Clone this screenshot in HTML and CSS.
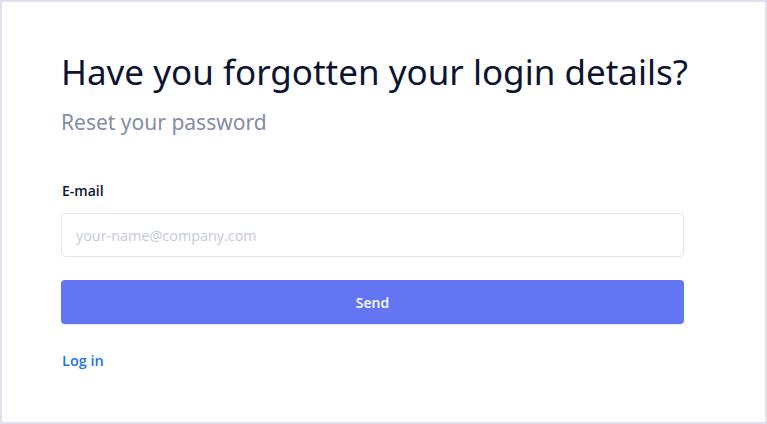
FILE: index.html
```html
<!DOCTYPE html>
<html>
<head>
<meta charset="utf-8">
<link rel="stylesheet" href="styles.css">
</head>
<body>
<div class="frame">
  <div class="content">
    <h1 class="title">Have you forgotten your login details?</h1>
    <p class="subtitle">Reset your password</p>
    <form class="form">
      <label class="label" for="email">E-mail</label>
      <input class="input" id="email" type="text" placeholder="your-name@company.com">
      <button class="button" type="button">Send</button>
    </form>
    <a class="link" href="#">Log in</a>
  </div>
</div>
</body>
</html>
```
FILE: styles.css
```css
html, body {
  margin: 0;
  padding: 0;
  background: #ffffff;
}
.frame {
  box-sizing: border-box;
  width: 767px;
  height: 424px;
  border: 2px solid #dfe2ec;
  padding: 46px 0 0 59px;
}
.content {
  width: 623px;
  display: flex;
  flex-direction: column;
}
.title {
  margin: 0;
  font-family: "Noto Sans", sans-serif;
  font-weight: 400;
  font-size: 35px;
  line-height: 48px;
  color: #0d1431;
  letter-spacing: 0;
  white-space: nowrap;
}
.subtitle {
  margin: 11px 0 0;
  font-family: "Noto Sans", sans-serif;
  font-size: 21px;
  line-height: 30px;
  color: #858ca6;
}
.form {
  display: flex;
  flex-direction: column;
  margin-top: 44px;
}
.label {
  font-family: "Open Sans", sans-serif;
  font-weight: 600;
  font-size: 14px;
  line-height: 20px;
  color: #0d1431;
  margin-left: 1px;
}
.input {
  box-sizing: border-box;
  margin-top: 12px;
  height: 44px;
  width: 623px;
  border: 1px solid #e1e4ed;
  border-radius: 4px;
  padding: 0 14px;
  font-family: "Open Sans", sans-serif;
  font-size: 14.4px;
  color: #0d1431;
  outline: none;
}
.input::placeholder {
  color: #c5c9da;
}
.button {
  margin-top: 23px;
  height: 44px;
  width: 623px;
  border: none;
  border-radius: 4px;
  background: #6375f3;
  color: #ffffff;
  font-family: "Open Sans", sans-serif;
  font-weight: 600;
  font-size: 14px;
  box-shadow: 0 1px 2px rgba(20, 30, 80, 0.12);
}
.link {
  margin-top: 27px;
  margin-left: 1px;
  align-self: flex-start;
  font-family: "Open Sans", sans-serif;
  font-weight: 600;
  font-size: 14.5px;
  line-height: 20px;
  color: #1a73e8;
  text-decoration: none;
}
```
